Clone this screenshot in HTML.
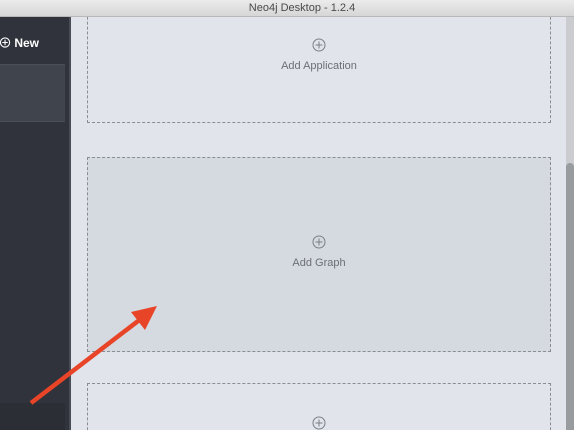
<!DOCTYPE html>
<html style="overflow:hidden;height:430px"><head><style>
body{margin:0;width:574px;height:430px;overflow:hidden;background:#e1e4eb;font-family:"Liberation Sans",sans-serif;position:relative}
.title{position:absolute;left:0;top:0;width:574px;height:16px;background:linear-gradient(#ebebeb,#d6d6d6);border-bottom:1px solid #b8b8b8;font-size:11px;color:#4a4a4a;text-align:center;line-height:16px;text-indent:30px;z-index:5}
.side{position:absolute;left:0;top:17px;width:69px;height:413px;background:#30333b;border-right:2px solid #484c54}
.sel{position:absolute;left:0;top:47px;width:65px;height:56px;background:#40444d;border-top:1px solid #4b4f58;border-bottom:1px solid #4b4f58}
.bot{position:absolute;left:0;top:386px;width:65px;height:27px;background:#2b2e35}
.new{position:absolute;left:0;top:19px;color:#fff;font-size:12px;font-weight:bold}
.box{position:absolute;left:87px;width:462px;border:1px dashed #8a8d92;text-align:center;color:#6b6f76;font-size:11px}
.plus{display:block;margin:0 auto 8px;}
.sb{position:absolute;left:566px;top:17px;width:8px;height:413px;background:#caccd0}
.th{position:absolute;left:566px;top:163px;width:8px;height:267px;background:#999c9f;border-radius:4px 4px 0 0}
</style></head><body>
<div class="title">Neo4j Desktop - 1.2.4</div>
<div class="side"><div class="new"><svg width="11" height="11" viewBox="0 0 12 12" style="vertical-align:-1px"><circle cx="5.5" cy="6" r="5" fill="none" stroke="#fff" stroke-width="1.2"/><path d="M5.5 3v6M2.5 6h6" stroke="#fff" stroke-width="1.2"/></svg> New</div><div class="sel"></div><div class="bot"></div></div>
<div class="box" style="top:2px;height:119px"><div style="margin-top:35px"><svg class="plus" width="14" height="14" viewBox="0 0 14 14"><circle cx="7" cy="7" r="6" fill="none" stroke="#7a7e85"/><path d="M7 3.5v7M3.5 7h7" stroke="#7a7e85"/></svg>Add Application</div></div>
<div class="box" style="top:157px;height:193px;background:#d5d9e0"><div style="margin-top:77px"><svg class="plus" width="14" height="14" viewBox="0 0 14 14"><circle cx="7" cy="7" r="6" fill="none" stroke="#7a7e85"/><path d="M7 3.5v7M3.5 7h7" stroke="#7a7e85"/></svg>Add Graph</div></div>
<div class="box" style="top:383px;height:60px"><div style="margin-top:32px"><svg class="plus" width="14" height="14" viewBox="0 0 14 14"><circle cx="7" cy="7" r="6" fill="none" stroke="#7a7e85"/><path d="M7 3.5v7M3.5 7h7" stroke="#7a7e85"/></svg></div></div>
<div class="sb"></div><div class="th"></div>
<svg style="position:absolute;left:0;top:0" width="574" height="430"><line x1="31" y1="403" x2="142" y2="318" stroke="#e84427" stroke-width="4.5"/><polygon points="157,306 131,312 145,330" fill="#e84427"/></svg>
</body></html>
